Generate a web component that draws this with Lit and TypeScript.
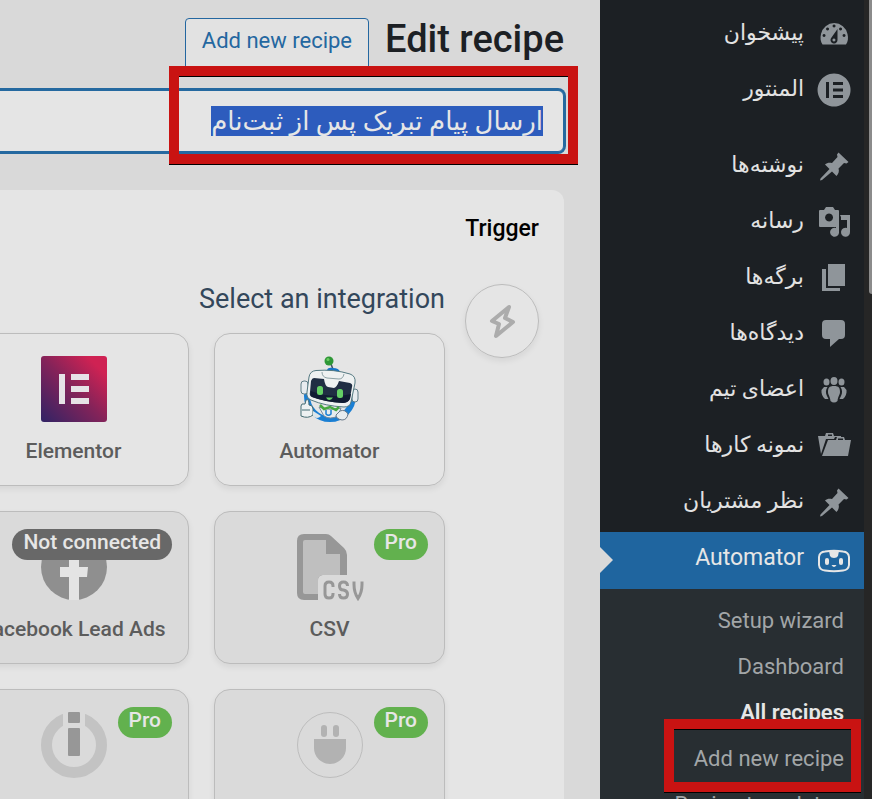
import { LitElement, html, css, svg } from "lit";
import { customElement } from "lit/decorators.js";

type Item = { label: string; icon: unknown; gap?: boolean };

const pin = svg`<path d="M21.500 3.500 31.500 13 29.500 14.500 27 14 21.500 19.500C22.500 22 21.500 25 19.500 27L15 22.500 5 31 3 31.500 3.500 29.500 12.500 20 8 15.500C10 13.500 12.500 13.500 15 14L20.500 8 20 5.500Z"/>`;

const menu: Item[] = [
  { label: "پیشخوان", icon: svg`<path fill-rule="evenodd" d="M5.500 27.500C3.500 25 3 21 4 17A13.500 13.500 0 0 1 30.500 17C31.500 21 31 25 29 27.500ZM17 7.500a1.500 1.500 0 1 0 .1 0ZM10.500 10.500a1.500 1.500 0 1 0 .1 0ZM23.500 10.500a1.500 1.500 0 1 0 .1 0ZM7 17a1.500 1.500 0 1 0 .1 0ZM27 17a1.500 1.500 0 1 0 .1 0ZM20.500 12 14.500 20.500A3.500 3.500 0 1 0 20.500 23ZM17 21.500a1.500 1.500 0 1 1-.1 0Z"/>` },
  { label: "المنتور", icon: svg`<path fill-rule="evenodd" d="M17 .5a16.500 16.500 0 1 0 .1 0ZM9 9h3v16H9ZM16 9h10v3H16ZM16 15.500h10v3H16ZM16 22h10v3H16Z"/>` },
  { label: "نوشته‌ها", icon: pin, gap: true },
  { label: "رسانه", icon: svg`<path fill-rule="evenodd" d="M4 5h3l2-3h7l2 3h3q1 0 1 1v15q0 1-1 1H3q-1 0-1-1V6q0-1 1-1ZM12 8.500a4 4 0 1 0 .1 0Z"/><path d="M23 10h10v17a4.500 4.500 0 1 1-3-4V15h-6v-3ZM19 23V20h3v8a4.500 4.500 0 1 1-3-5Z"/>` },
  { label: "برگه‌ها", icon: svg`<path d="M11 3h17v22H11ZM5 8h4v19h14v3H5Z"/>` },
  { label: "دیدگاه‌ها", icon: svg`<path d="M9 3h15q4 0 4 4v11q0 4-4 4h-2l-9 8v-8H9q-4 0-4-4V7q0-4 4-4Z"/>` },
  { label: "اعضای تیم", icon: svg`<ellipse cx="17" cy="8" rx="3.500" ry="4"/><ellipse cx="9.500" cy="9" rx="3" ry="3.500"/><ellipse cx="24.500" cy="9" rx="3" ry="3.500"/><path d="M17 13c5 0 6 2 6 6 0 3-2 4-2.500 9q-3.500 3-7 0c-.500-5-2.500-6-2.500-9 0-4 1-6 6-6ZM7 14h3.500c-2 3-2 6-.500 9l1.500 3H8C5.500 24 4 20 4.500 17ZM27 14h-3.500c2 3 2 6 .500 9L22.500 26H26C28.500 24 30 20 29.500 17Z"/>` },
  { label: "نمونه کارها", icon: svg`<path fill-rule="evenodd" d="M1 7h7l1-3h7l1 3h7v1h-6l-1 2H9L4 25ZM11 7h4V5.500h-4Z"/><path fill-rule="evenodd" d="M11 11h8l1-3h7l1 3h6l-3 16H5ZM21 11h5V9.500h-5Z"/>` },
  { label: "نظر مشتریان", icon: pin },
];

const bot = svg`<path d="M8 7.500Q17 6 26 7.500 31.500 8 32 13v8q-.500 5-6 5.500-9 1.500-18 0Q2.500 26 2 21v-8Q2.500 8 8 7.500Z" fill="none" stroke="#e6e6e6" stroke-width="2"/><path d="M12 7h10l-1 5q-1 2-4 2t-4-2Z"/><rect x="8" y="14" width="4" height="7" rx="2"/><rect x="22" y="14" width="4" height="7" rx="2"/><path d="M14.500 21h5q-2.500 4-5 0Z"/>`;

const robot = svg`<circle cx="33" cy="40" r="23" fill="none" stroke="#1b7fd3" stroke-width="6"/>
<path d="M10 20 50 12 60 36 40 52 14 44Z" fill="#e5e5e5"/>
<path d="m34 8 3 8" stroke="#456" stroke-width="1.500"/><circle cx="32" cy="5" r="4.500" fill="#2e9736"/><circle cx="31" cy="3.500" r="1.500" fill="#6bcc61"/>
<path d="M30 15q0-4 6-3 6 0 7 4v2H30Z" fill="#1674c8"/>
<rect x="4" y="25" width="7" height="13" rx="3" fill="#e7ecef" stroke="#607e88"/><rect x="55" y="33" width="6" height="13" rx="3" fill="#e7ecef" stroke="#607e88"/>
<path d="M19 14.500Q37 13 53 18q6 2 5 9l-4 19q-1 5-7 5-19-1-33-7-5-2-4-8l2-15q1-6 7-6.500Z" fill="#eef1f1" stroke="#547981"/>
<path d="M25 16q0 5 5 6l12 1q4 0 5-5" fill="none" stroke="#8da2a6"/>
<path d="M17 22 27 23Q28 30 31 31L37 32Q40 31 42 25L53 27Q56 28 55 31L53 42Q52 46 46 47 28 46 15 41 12 40 13 36L14 25Q15 22 17 22Z" fill="#202e43"/>
<path d="M14 35Q34 43 54 38L53 43Q51 47 46 47 28 46 15 41 13 40 14 35Z" fill="#111c33"/>
<rect x="20" y="30" width="6" height="9" rx="2.500" fill="#65d066"/><rect x="40" y="33" width="6" height="9" rx="2.500" fill="#65d066"/><path d="M29 41.500h7q-4 5-7 0Z" fill="#65d066"/>
<path d="M22 51q11 4 22 1l-3 8q-8 4-14 0Z" fill="#e7ecef" stroke="#789"/>
<path d="m23 49 4 4 6-2 6 3 3-3" fill="none" stroke="#47a841" stroke-width="2.500"/><path d="M29 54v4q2.500 2.500 5 0v-4" fill="none" stroke="#1b7fd3" stroke-width="1.500"/>
<path d="M9 44q3-2 3 5 4 0 4 4v6q-5 4-12 1V50q0-3 4-2Z" fill="#edf1f2" stroke="#456c72"/><path d="M5 54h8" stroke="#456c72"/><path d="m16 55 8 5q-4 4-8 0Z" fill="#dde6ea"/>
<path d="M43 55q5-2 8 3-1 6-6 6-6-1-6-5Z" fill="#e7ecef" stroke="#678"/>`;

const csvArt = svg`<path d="M7 0H29q3 0 5 2L47 14q3 3 3 7V41H26q-5 0-5 6V66H7q-7 0-7-7V7q0-7 7-7Z" fill="#979797"/><path d="M8 6H29V20H43V41H26q-5 0-5 6V60H8q-2 0-2-2V8q0-2 2-2Z" fill="#bfbfbf"/><path d="M29 41H50V47H21Q21 41 29 41Z" fill="#dadada"/><path d="M36 53v-1q0-4-4-4t-4 4v8q0 4 4 4t4-4v-1M50.500 52q0-4-4-4-4 0-4 4t4 4q4 1 4 4 0 4-4 4-4 0-4-4M57 47.500v3q0 8 4 14 4-6 4-14v-3" fill="none" stroke="#979797" stroke-width="3"/>`;

const art = {
  automator: robot,
  elementor: svg`<defs><linearGradient id="g" x1="0" y1="1" x2="1" y2="0"><stop stop-color="#302365"/><stop offset=".5" stop-color="#852359"/><stop offset=".85" stop-color="#cf2253"/></linearGradient></defs><rect width="66" height="66" rx="3" fill="url(#g)"/><path fill="#e6e2e6" d="M18 18h6v30h-6ZM30 18h18v6H30ZM30 30h18v6H30ZM30 42h18v6H30Z"/>`,
  csv: csvArt,
  facebook: svg`<circle cx="33" cy="33" r="33" fill="#8f8f8f"/><path fill="#e4e4e4" d="M28 66V43h-9V33h9V22h10v11h9l-1 10h-8v23Z"/>`,
  plug: svg`<circle cx="33" cy="33" r="32.500" fill="none" stroke="#bdbdbd"/><rect x="24" y="13" width="6" height="12" rx="3" fill="#b2b2b2"/><rect x="36" y="13" width="6" height="12" rx="3" fill="#b2b2b2"/><path d="M17 27h32v9a16 16 0 0 1-32 0Z" fill="#b2b2b2"/>`,
  info: svg`<circle cx="33" cy="33" r="27.500" fill="none" stroke="#c3c3c3" stroke-width="11"/><path d="M22 0h22v16H22Z" fill="#dadada"/><rect x="27" y="0" width="12" height="11" rx="1" fill="#979797"/><rect x="27" y="16" width="12" height="28" rx="1" fill="#979797"/>`,
};

const cards = [
  { name: "Automator", art: art.automator, badge: "" },
  { name: "Elementor", art: art.elementor, badge: "" },
  { name: "CSV", art: art.csv, badge: "Pro" },
  { name: "Facebook Lead Ads", art: art.facebook, badge: "Not connected" },
  { name: "Any plugin", art: art.plug, badge: "Pro" },
  { name: "Integrately", art: art.info, badge: "Pro" },
];

@customElement("app-root")
export class AppRoot extends LitElement {
  static styles = css`
    :host { display: block; height: 100vh; overflow: hidden; font-family: Roboto, "DejaVu Sans", sans-serif; background: #d9d9d9; color: #1c2024; }
    * { box-sizing: border-box; }
    .page { position: relative; display: flex; direction: rtl; height: 100%; }
    .scroll { flex: none; width: 8px; background: #262626; }
    .thumb { width: 3px; height: 294px; margin-inline-end: auto; border-radius: 0 0 0 3px; background: #8b8b8b; }
    .side { position: relative; flex: none; width: 264px; height: 100%; overflow: hidden; background: #1c2024; padding-top: 6px; }
    .item { display: flex; align-items: center; gap: 13px; height: 56px; padding-inline-start: 13px; color: #e2e2e2; text-decoration: none; font-size: 22px; }
    .item svg { flex: none; width: 34px; height: 34px; fill: #8f959a; }
    .label { height: 32px; line-height: 30px; white-space: nowrap; }
    .gap { margin-top: 20px; }
    .current { position: relative; height: 57px; margin-top: 2px; background: #1f659f; font-size: 23px; color: #e6e6e6; }
    .current .label { line-height: 26px; }
    .current svg { fill: #e6e6e6; }
    .current::after { content: ""; position: absolute; left: 0; top: 15px; border: 13px solid transparent; border-left-color: #d9d9d9; border-right: 0; }
    .sub { display: flex; flex-direction: column; padding: 9px 20px; height: 240px; background: #282e32; direction: ltr; text-align: right; }
    .sub a { height: 46px; flex: none; line-height: 46px; font-size: 22px; color: #a2a6a8; text-decoration: none; }
    .sub .on { color: #e6e6e6; font-weight: 600; }
    .main { flex: 1; min-width: 0; overflow: clip; padding-inline-start: 36px; }
    .head { display: flex; align-items: flex-start; gap: 16px; height: 90px; padding-top: 18px; }
    h1 { margin: 0; font-size: 38px; line-height: 42px; font-weight: 500; direction: ltr; }
    .add { height: 52px; padding: 0 16px 8px; border: 1px solid #2467a0; border-radius: 4px; background: #e2e2e2; color: #2467a0; font: 22px Roboto, sans-serif; }
    .title { display: block; width: 900px; height: 62px; padding: 0 20px; border: 1px solid #2569a0; border-radius: 6px; box-shadow: 0 0 0 2px #2569a0; background: #e5e5e5; color: #e6e6e6; font: 500 26px Roboto, "DejaVu Sans", sans-serif; outline: 0; }
    .title::selection { background: #2d5cbd; color: #e6e6e6; }
    .panel { width: 900px; height: 800px; margin-top: 38px; padding: 25px; border-radius: 12px; background: #e5e5e5; }
    h2 { margin: 0; font-size: 23px; line-height: 28px; font-weight: 500; color: #000; }
    .step { display: flex; align-items: flex-start; gap: 20px; margin-top: 41px; }
    .bolt { flex: none; display: grid; place-items: center; width: 74px; height: 74px; border: 1px solid #bcbcbc; border-radius: 50%; box-shadow: 0 3px 6px #00000012; }
    .bolt svg { width: 34px; height: 40px; }
    .choose h3 { margin: 0 0 18px; font-size: 27px; line-height: 31px; font-weight: 400; color: #33475b; }
    .grid { display: grid; grid-template-columns: 231px 231px; gap: 25px; }
    .card { position: relative; display: flex; flex-direction: column; align-items: center; gap: 14px; height: 153px; padding: 22px 0 0; border: 1px solid #bcbcbc; border-radius: 16px; background: transparent; box-shadow: 0 3px 6px #00000012; font: 500 21px Roboto, sans-serif; line-height: 30px; color: #5c5c5c; direction: ltr; white-space: nowrap; }
    .muted { background: #dadada; }
    .card svg { flex: none; width: 66px; height: 66px; overflow: visible; }
    .badge { position: absolute; top: 17px; right: 16px; height: 31px; padding: 0 11px; border-radius: 16px; line-height: 26px; background: #62b14e; color: #e6e6e6; }
    .off { background: #686868; }
    .mark { position: absolute; border: 10px solid #c91312; box-shadow: 0 1px #000, inset 0 1px #000; pointer-events: none; }
    .mark-title { left: 169px; top: 66px; width: 409px; height: 98px; }
    .mark-menu { left: 64px; top: 719px; width: 197px; height: 73px; }
  `;

  firstUpdated() {
    const input = this.renderRoot.querySelector("input")!;
    input.focus({ preventScroll: true });
    input.select();
  }

  render() {
    return html`<div class="page">
      <div class="scroll"><div class="thumb"></div></div>
      <nav class="side">
        ${menu.map((m) => html`<a href="#" class="item ${m.gap ? "gap" : ""}"><svg viewBox="0 0 34 34">${m.icon}</svg><span class="label">${m.label}</span></a>`)}
        <a href="#" class="item current"><svg viewBox="0 0 34 34">${bot}</svg><span class="label">Automator</span></a>
        <div class="sub">
          <a href="#">Setup wizard</a><a href="#">Dashboard</a><a href="#" class="on">All recipes</a><a href="#">Add new recipe</a><a href="#">Recipe templates</a>
        </div>
        <div class="mark mark-menu"></div>
      </nav>
      <main class="main">
        <header class="head"><h1>Edit recipe</h1><button class="add">Add new recipe</button></header>
        <input class="title" aria-label="Recipe title" value="ارسال پیام تبریک پس از ثبت‌نام">
        <section class="panel">
          <h2>Trigger</h2>
          <div class="step">
            <div class="bolt"><svg viewBox="0 0 34 40" fill="none" stroke="#acacac" stroke-width="4" stroke-linejoin="round"><path d="M24 6 7 20 14 23 11 35 28 21 20 17Z"/></svg></div>
            <div class="choose">
              <h3>Select an integration</h3>
              <div class="grid">
                ${cards.map((c, i) => html`<button class="card ${i > 1 ? "muted" : ""}"><svg viewBox="0 0 66 66">${c.art}</svg><span>${c.name}</span>${c.badge ? html`<span class="badge ${c.badge === "Pro" ? "" : "off"}">${c.badge}</span>` : ""}</button>`)}
              </div>
            </div>
          </div>
        </section>
      </main>
      <div class="mark mark-title"></div>
    </div>`;
  }
}
